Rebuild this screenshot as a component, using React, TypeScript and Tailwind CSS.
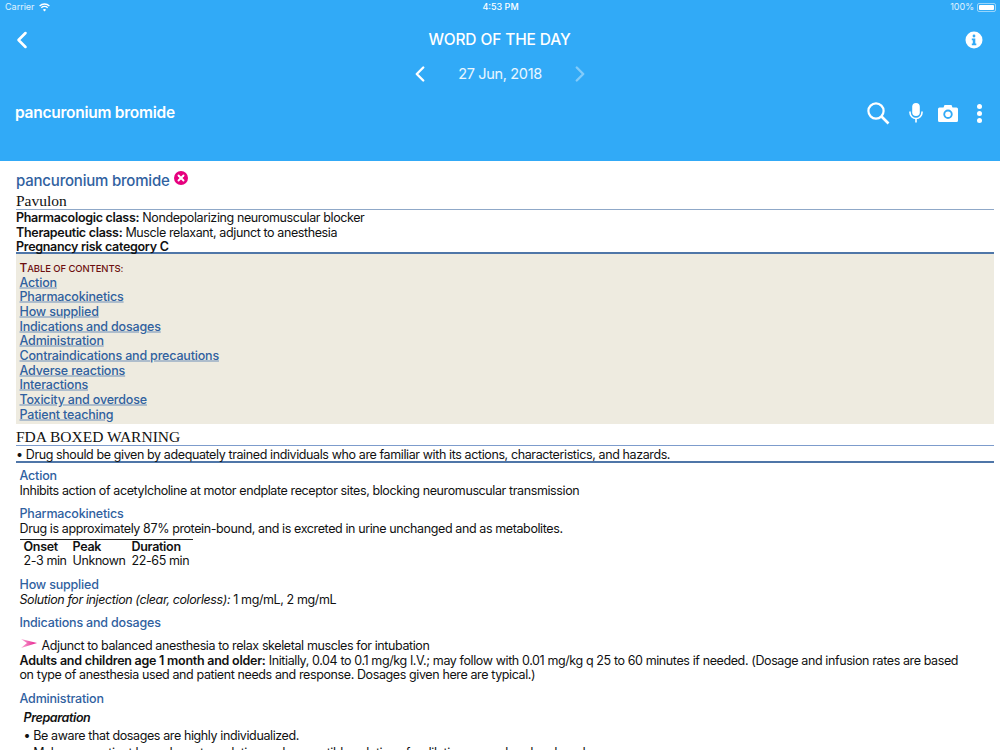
import { ChevronLeft, ChevronRight, X } from 'lucide-react';

const TOC = [
  'Action',
  'Pharmacokinetics',
  'How supplied',
  'Indications and dosages',
  'Administration',
  'Contraindications and precautions',
  'Adverse reactions',
  'Interactions',
  'Toxicity and overdose',
  'Patient teaching',
];

function SectionTitle({ children }: { children: string }) {
  return <h3 className="font-medium tracking-[-0.18px] text-[#30619f]">{children}</h3>;
}

function Wifi() {
  return (
    <svg width="11" height="9" viewBox="0 0 11 9" fill="none" stroke="white" strokeWidth="1.3">
      <path d="M0.6 3 A7 7 0 0 1 10.4 3" />
      <path d="M2.3 4.8 A4.6 4.6 0 0 1 8.7 4.8" />
      <path d="M5.5 8.6 L3.9 6.7 A2.4 2.4 0 0 1 7.1 6.7 Z" fill="white" stroke="none" />
    </svg>
  );
}

function Header() {
  return (
    <header className="h-[161px] shrink-0 bg-[#31aaf7] text-white flex flex-col tracking-normal">
      <div className="h-[15px] pl-[5px] pr-[4px] flex items-center justify-between text-[9px] text-white/85">
        <div className="w-[200px] flex items-center gap-[4px]">
          Carrier
          <Wifi />
        </div>
        <span className="font-medium text-white">4:53 PM</span>
        <div className="w-[200px] flex items-center justify-end gap-[3px]">
          100%
          <div className="w-[19px] h-[9px] border border-white/50 rounded-[2px] p-px">
            <div className="h-full bg-white rounded-[1px]" />
          </div>
        </div>
      </div>
      <div className="mt-[10px] h-[30px] pl-[8px] pr-[17px] flex items-center justify-between">
        <ChevronLeft size={28} strokeWidth={2.2} />
        <h1 className="mr-[2px] text-[15.5px] font-medium tracking-[-0.13px]">WORD OF THE DAY</h1>
        <svg width="18" height="18" viewBox="0 0 18 18">
          <circle cx="9" cy="9" r="8.5" fill="white" />
          <rect x="7.6" y="3.6" width="2.8" height="2.8" rx="1.4" fill="#31aaf7" />
          <path d="M6.8 7.6 H10.3 V12.6 H11.3 V14.2 H6.8 V12.6 H7.8 V9.2 H6.8 Z" fill="#31aaf7" />
        </svg>
      </div>
      <div className="mt-[4px] h-[30px] flex items-center justify-center">
        <ChevronLeft size={26} strokeWidth={2.2} />
        <span className="w-[134px] text-center text-[14.5px] tracking-[-0.33px] text-white/90">27 Jun, 2018</span>
        <ChevronRight size={26} strokeWidth={2.2} className="text-white/40" />
      </div>
      <div className="mt-[9px] h-[30px] pl-[15px] pr-[18px] flex items-center justify-between">
        <span className="text-[15.5px] font-semibold tracking-[-0.25px]">pancuronium bromide</span>
        <div className="flex items-center">
          <svg width="24" height="24" viewBox="0 0 24 24" fill="none" stroke="white" strokeWidth="2.2">
            <circle cx="10" cy="10" r="7.6" />
            <path d="M15.5 15.5 L22.5 22.5" strokeWidth="2.6" />
          </svg>
          <svg width="14" height="20" viewBox="0 0 14 20" fill="none" stroke="white" strokeWidth="1.6" className="ml-[19px]">
            <rect x="3.2" y="0" width="7.6" height="13" rx="3.8" fill="white" stroke="none" />
            <path d="M1 8.5 V9.5 A6 6 0 0 0 13 9.5 V8.5" />
            <path d="M7 15 V19.5" />
          </svg>
          <svg width="20" height="17" viewBox="0 0 20 17" className="ml-[15px]">
            <path
              fillRule="evenodd"
              fill="white"
              d="M1.5 2.5 H5.5 L6.5 0 H13.5 L14.5 2.5 H18.5 A1.5 1.5 0 0 1 20 4 V15.5 A1.5 1.5 0 0 1 18.5 17 H1.5 A1.5 1.5 0 0 1 0 15.5 V4 A1.5 1.5 0 0 1 1.5 2.5 Z M10 4.5 A4.7 4.7 0 1 0 10 13.9 A4.7 4.7 0 1 0 10 4.5 Z"
            />
            <circle cx="10" cy="9.2" r="2.8" fill="white" />
          </svg>
          <div className="ml-[19px] flex flex-col gap-[2px]">
            <div className="w-[5px] h-[5px] rounded-full bg-white" />
            <div className="w-[5px] h-[5px] rounded-full bg-white" />
            <div className="w-[5px] h-[5px] rounded-full bg-white" />
          </div>
        </div>
      </div>
    </header>
  );
}

export default function App() {
  return (
    <div
      className="h-[750px] overflow-hidden flex flex-col bg-white text-[12.5px] leading-[14.67px] tracking-[-0.39px] text-[#111]"
      style={{ fontFamily: 'Inter, "Liberation Sans", sans-serif' }}
    >
      <Header />
      <main className="pl-4 pr-[6px] pt-[11px]">
        <div className="flex items-start text-[15px] leading-[18px] font-medium tracking-[-0.2px] text-[#30619f]">
          pancuronium bromide
          <span className="ml-[4px] -mt-[1px] w-[14px] h-[14px] rounded-full bg-[#e6007e] text-white flex items-center justify-center">
            <X size={10} strokeWidth={4.5} />
          </span>
        </div>
        <div className="mt-[2px] border-b border-[#8fa8c8] font-['Liberation_Serif',serif] text-[15.5px] leading-[17px] tracking-normal text-[#111]">
          Pavulon
        </div>
        <div className="border-b-2 border-[#4f76a8] pt-px h-[44px]">
          <p><b className="font-semibold tracking-[-0.3px]">Pharmacologic class:</b> Nondepolarizing neuromuscular blocker</p>
          <p><b className="font-semibold tracking-[-0.3px]">Therapeutic class:</b> Muscle relaxant, adjunct to anesthesia</p>
          <p><b className="font-semibold tracking-[-0.3px]">Pregnancy risk category C</b></p>
        </div>
        <nav className="bg-[#eeebe0] px-[3.5px] pt-[7px] h-[170px]">
          <div className="text-[#6d0f0f] text-[12px] font-medium tracking-[-0.1px]">
            T<span className="text-[9.5px] uppercase">able of contents:</span>
          </div>
          {TOC.map((item) => (
            <div key={item} className="-translate-y-[1.5px]">
              <a className="underline decoration-[#6f8fb8] font-medium tracking-[-0.18px] text-[#30619f]">{item}</a>
            </div>
          ))}
        </nav>
        <div className="mt-[4px] border-b border-[#7d9ccc] font-['Liberation_Serif',serif] text-[15.5px] leading-[17px] tracking-normal text-[#111]">
          FDA BOXED WARNING
        </div>
        <div className="border-b-2 border-[#4f76a8] h-[17px] pt-[2px]">
          • Drug should be given by adequately trained individuals who are familiar with its actions, characteristics, and hazards.
        </div>
        <section className="pl-[3.5px]">
          <div className="mt-[6px]">
            <SectionTitle>Action</SectionTitle>
            <p>Inhibits action of acetylcholine at motor endplate receptor sites, blocking neuromuscular transmission</p>
          </div>
          <div className="mt-[9px]">
            <SectionTitle>Pharmacokinetics</SectionTitle>
            <p>Drug is approximately 87% protein-bound, and is excreted in urine unchanged and as metabolites.</p>
            <div className="mt-[2px] w-[173px] border-t border-[#222] pl-[4px] grid grid-cols-[49px_59px_1fr] whitespace-nowrap">
              <span className="font-semibold tracking-[-0.3px]">Onset</span>
              <span className="font-semibold tracking-[-0.3px]">Peak</span>
              <span className="font-semibold tracking-[-0.3px]">Duration</span>
              <span>2-3 min</span>
              <span>Unknown</span>
              <span>22-65 min</span>
            </div>
          </div>
          <div className="mt-[9px]">
            <SectionTitle>How supplied</SectionTitle>
            <p><i>Solution for injection (clear, colorless):</i> 1 mg/mL, 2 mg/mL</p>
          </div>
          <div className="mt-[9px]">
            <SectionTitle>Indications and dosages</SectionTitle>
            <p className="mt-[8px] flex items-center">
              <svg width="17" height="10" viewBox="0 0 17 10" className="ml-[1px] mr-[4px] -mt-[5px]">
                <defs>
                  <linearGradient id="arrowPink" x1="0" y1="0" x2="1" y2="0">
                    <stop offset="0" stopColor="#f7a8d4" />
                    <stop offset="1" stopColor="#e6178a" />
                  </linearGradient>
                </defs>
                <path d="M0 0 L16 4 L0 9 L6 4 Z" fill="url(#arrowPink)" />
              </svg>
              Adjunct to balanced anesthesia to relax skeletal muscles for intubation
            </p>
            <p className="pr-[30px]">
              <b className="font-semibold tracking-[-0.25px]">Adults and children age 1 month and older:</b> Initially, 0.04 to 0.1 mg/kg I.V.; may follow with 0.01 mg/kg q 25 to 60 minutes if needed. (Dosage and infusion rates are based on type of anesthesia used and patient needs and response. Dosages given here are typical.)
            </p>
          </div>
          <div className="mt-[9px]">
            <SectionTitle>Administration</SectionTitle>
            <p className="mt-[4px] pl-[4px] font-semibold italic">Preparation</p>
            <p className="mt-[4px] pl-[4px]">• Be aware that dosages are highly individualized.</p>
            <p className="mt-[2px] pl-[4px]">• Make sure patient has adequate sedation and compatible solutions for dilution are on hand and ready.</p>
          </div>
        </section>
      </main>
    </div>
  );
}
